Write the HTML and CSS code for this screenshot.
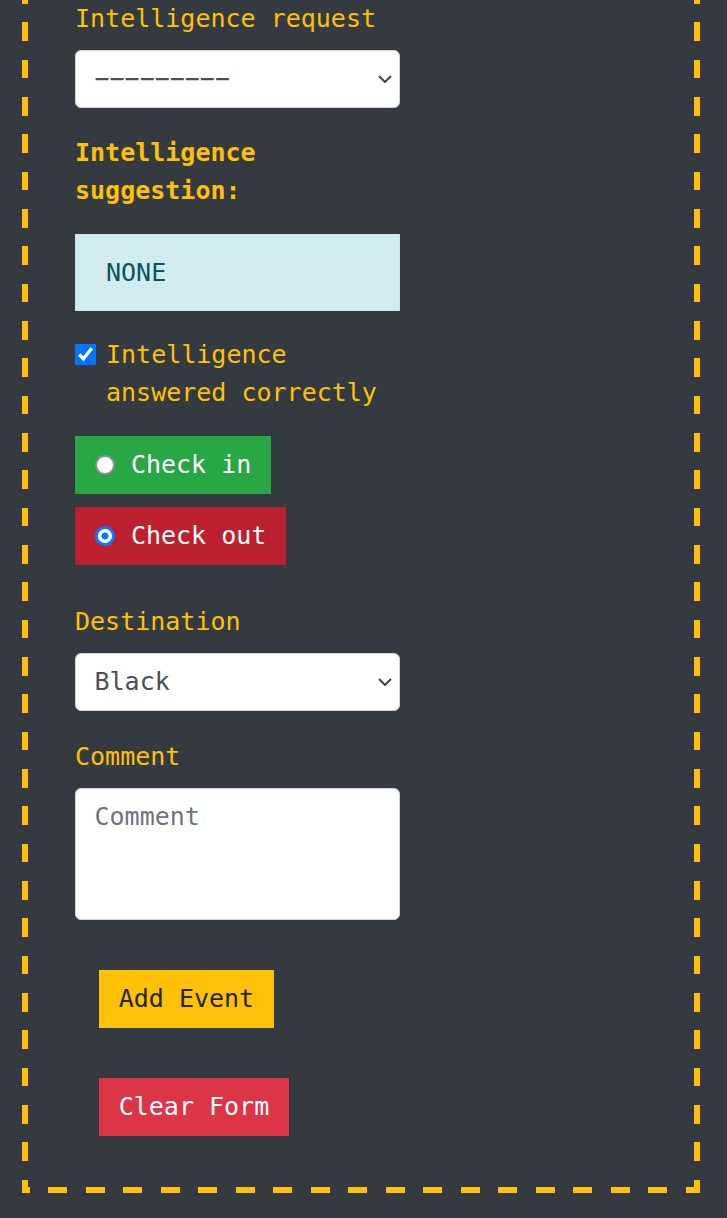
FILE: index.html
```html
<!DOCTYPE html>
<html lang="en">
<head>
<meta charset="utf-8">
<title>Event form</title>
<link rel="stylesheet" href="styles.css">
</head>
<body>
<div class="frame">
  <form class="col">
    <div class="group">
      <label class="label" for="req">Intelligence request</label>
      <select id="req" class="control select">
        <option>−−−−−−−−−</option>
      </select>
    </div>

    <div class="suggest-label">Intelligence suggestion:</div>
    <div class="alert">NONE</div>

    <div class="group check">
      <input type="checkbox" id="correct" class="checkbox" checked>
      <label for="correct" class="check-label">Intelligence answered correctly</label>
    </div>

    <div class="toggles">
      <label class="btn btn-in"><input type="radio" name="dir" class="radio"><span>Check in</span></label>
      <label class="btn btn-out"><input type="radio" name="dir" class="radio" checked><span>Check out</span></label>
    </div>

    <div class="group dest">
      <label class="label" for="dest">Destination</label>
      <select id="dest" class="control select">
        <option>Black</option>
      </select>
    </div>

    <div class="group">
      <label class="label" for="comment">Comment</label>
      <textarea id="comment" class="control area" rows="3" placeholder="Comment"></textarea>
    </div>

    <div class="actions">
      <button type="button" class="btn btn-add">Add Event</button>
      <button type="button" class="btn btn-clear">Clear Form</button>
    </div>
  </form>
</div>
</body>
</html>
```

FILE: styles.css
```css
html, body {
  margin: 0;
  padding: 0;
}

body {
  background: #343a40;
  font-family: "DejaVu Sans Mono", monospace;
  font-size: 25px;
  line-height: 37.5px;
  color: #ffc107;
  padding-bottom: 25px;
}

/* dashed frame drawn with gradients for exact dash length and rhythm */
.frame {
  margin: -31px 0 0 22px;
  width: 678px;
  box-sizing: border-box;
  border: 6px solid transparent;
  padding: 25px 0 0 47px;
  background-origin: border-box;
  background-clip: border-box;
  background-repeat: no-repeat;
  background-image:
    repeating-linear-gradient(to bottom, #ffc107 0 18.7px, transparent 18.7px 37.33px),
    repeating-linear-gradient(to bottom, #ffc107 0 18.7px, transparent 18.7px 37.33px),
    repeating-linear-gradient(to right, #ffc107 0 19px, transparent 19px 37.5px);
  background-size:
    6px calc(100% + 40px),
    6px calc(100% + 40px),
    calc(100% + 40px) 6px;
  background-position:
    0 -21.33px,
    100% -21.33px,
    -11px 100%;
}

.col {
  width: 325px;
  display: flex;
  flex-direction: column;
  margin: 0;
}

.group {
  display: flex;
  flex-direction: column;
  margin-bottom: 25px;
}

.label {
  display: block;
  margin-bottom: 12.5px;
  color: #ffc107;
}

.control {
  box-sizing: border-box;
  width: 325px;
  height: 58px;
  margin: 0;
  padding: 0 18.5px;
  font-family: "DejaVu Sans Mono", monospace;
  font-size: 25px;
  line-height: 37.5px;
  color: #495057;
  background-color: #fff;
  border: 1px solid #ced4da;
  border-radius: 6px;
}

.select {
  appearance: none;
  -webkit-appearance: none;
  padding-right: 40px;
  background-image: url("data:image/svg+xml,%3Csvg xmlns='http://www.w3.org/2000/svg' width='14' height='8' viewBox='0 0 14 8'%3E%3Cpath d='M1 1l6 6 6-6' fill='none' stroke='%23404448' stroke-width='2'/%3E%3C/svg%3E");
  background-repeat: no-repeat;
  background-position: right 7px center;
  background-size: 14px 8px;
}

.area {
  height: 132px;
  padding: 9px 18.5px;
  resize: none;
  display: block;
}

.area::placeholder {
  color: #6c757d;
  opacity: 1;
}

.suggest-label {
  font-weight: bold;
  margin-top: 1px;
  margin-bottom: 25px;
}

.alert {
  box-sizing: border-box;
  height: 77px;
  padding: 18.75px 30px;
  background: #d1ecf1;
  border: 1px solid #bee5eb;
  color: #0c5460;
  margin-bottom: 25px;
}

.check {
  flex-direction: row;
  align-items: flex-start;
  gap: 10px;
}

.checkbox {
  width: 21px;
  height: 21px;
  margin: 8px 0 0 0;
  flex: none;
}

.check-label {
  color: #ffc107;
}

.toggles {
  display: flex;
  flex-direction: column;
  align-items: flex-start;
  gap: 13px;
  margin-bottom: 37.5px;
}

.btn {
  display: inline-flex;
  align-items: center;
  box-sizing: border-box;
  height: 58px;
  padding: 0 18.7px;
  border: 1px solid transparent;
  border-radius: 0;
  font-family: "DejaVu Sans Mono", monospace;
  font-size: 25px;
  line-height: 37.5px;
  color: #fff;
  margin: 0;
}

.radio {
  appearance: none;
  -webkit-appearance: none;
  box-sizing: border-box;
  width: 20.7px;
  height: 20.7px;
  margin: 0 15.5px 0 0;
  flex: none;
  border-radius: 50%;
  border: 2.6px solid #8e8e96;
  background: #fff;
}

.radio:checked {
  border: 3.8px solid #0a7cff;
  background: radial-gradient(circle, #0a7cff 0 3.3px, #fff 3.8px);
}

.btn-in {
  background: #28a745;
  border-color: #28a745;
}

.btn-out {
  background: #bd2130;
  border-color: #b21f2d;
}

.dest {
  margin-bottom: 27px;
}

.actions {
  display: flex;
  flex-direction: column;
  align-items: flex-start;
  gap: 50px;
  padding: 25.5px 0 51px 24px;
}

.btn-add {
  background: #ffc107;
  border-color: #ffc107;
  color: #212529;
}

.btn-clear {
  background: #dc3545;
  border-color: #dc3545;
  color: #fff;
}
```
